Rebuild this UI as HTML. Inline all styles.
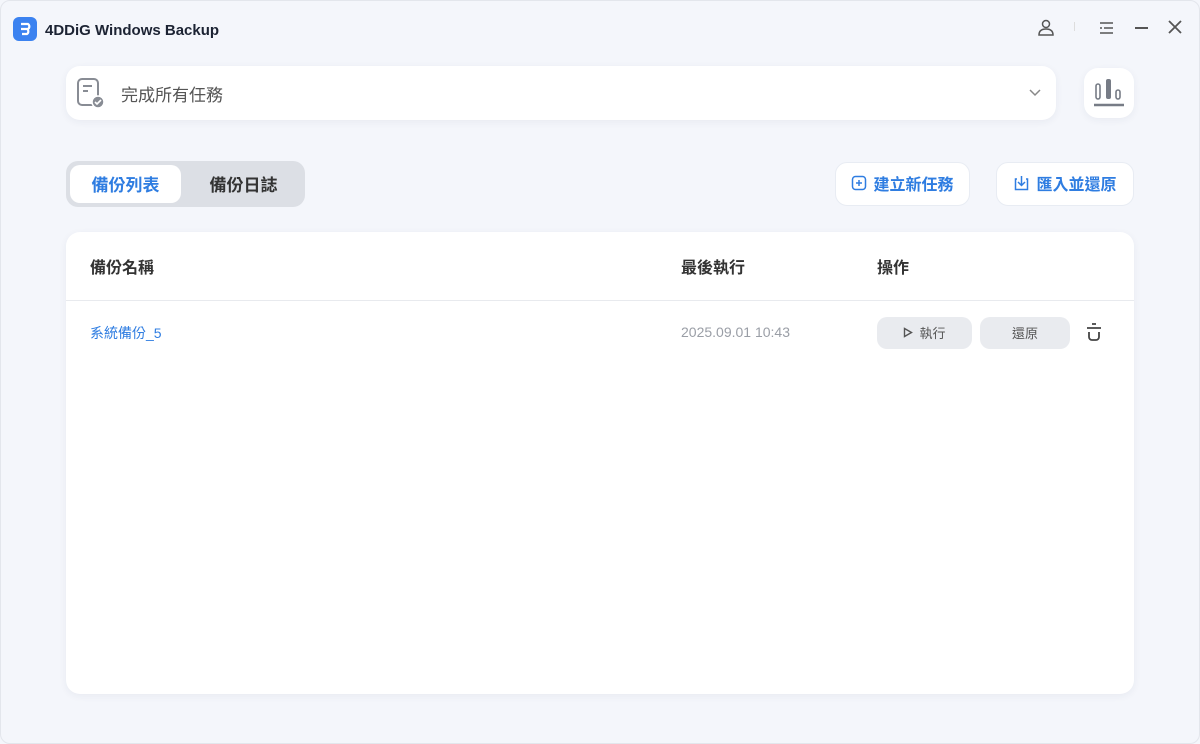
<!DOCTYPE html>
<html><head><meta charset="utf-8"><style>
*{margin:0;padding:0;box-sizing:border-box}
body{width:1200px;height:744px;background:#f4f6fb;font-family:"Liberation Sans","Noto Sans CJK TC",sans-serif;position:relative;overflow:hidden;color:#222}
.abs{position:absolute}
.card{background:#fff;border-radius:14px;box-shadow:0 2px 8px rgba(30,50,90,.06)}
.btn{background:#fff;border-radius:12px;color:#2f7de1;font-size:16px;font-weight:bold;display:flex;align-items:center;justify-content:center;gap:6px;border:1px solid #e8ecf3}
.gbtn{background:#e9ebef;border-radius:10px;font-size:13px;color:#555;display:flex;align-items:center;justify-content:center;gap:6px}
</style></head><body>
<div class="abs" style="left:0;top:0;width:1200px;height:744px;border:1px solid #e3e6ec;border-radius:10px"></div>
<div class="abs" style="left:13px;top:17px;width:24px;height:24px;background:#3b82f0;border-radius:6px"><svg width="24" height="24"><path d="M8 7h7a3 3 0 0 1 0 5H10M8 12h6a3 3 0 0 1 0 5H9" stroke="#fff" stroke-width="2.2" fill="none"/></svg></div>
<div class="abs" style="left:45px;top:22px;font-size:15px;font-weight:bold;color:#1c2333">4DDiG Windows Backup</div>
<svg class="abs" style="left:1036px;top:18px" width="20" height="20"><circle cx="10" cy="6" r="3.5" stroke="#555" stroke-width="1.5" fill="none"/><path d="M3 17q0-6 7-6t7 6z" stroke="#555" stroke-width="1.5" fill="none"/></svg>
<div class="abs" style="left:1074px;top:22px;width:1px;height:9px;background:#ddd"></div>
<svg class="abs" style="left:1098px;top:19px" width="18" height="18"><path d="M2 4h13M6 9h9M2 14h13M2 9h2" stroke="#555" stroke-width="1.6"/></svg>
<div class="abs" style="left:1135px;top:27px;width:13px;height:1.8px;background:#555"></div>
<svg class="abs" style="left:1167px;top:19px" width="16" height="16"><path d="M2 2l12 12M14 2L2 14" stroke="#555" stroke-width="1.8"/></svg>

<div class="abs card" style="left:66px;top:66px;width:990px;height:54px"></div>
<svg class="abs" style="left:76px;top:77px" width="30" height="32"><rect x="2" y="2" width="20" height="26" rx="4" stroke="#888c94" stroke-width="2" fill="none"/><path d="M7 9h9M7 14h5" stroke="#888c94" stroke-width="2"/><circle cx="22" cy="25" r="6" fill="#888c94" stroke="#fff" stroke-width="1.5"/><path d="M19 25l2 2 4-4" stroke="#fff" stroke-width="1.6" fill="none"/></svg>
<div class="abs" style="left:121px;top:81px;font-size:17px;color:#555">完成所有任務</div>
<svg class="abs" style="left:1028px;top:88px" width="14" height="10"><path d="M2 2l5 5 5-5" stroke="#888" stroke-width="1.5" fill="none"/></svg>
<div class="abs card" style="left:1084px;top:68px;width:50px;height:50px"></div>
<svg class="abs" style="left:1092px;top:78px" width="34" height="32"><rect x="4" y="6" width="4" height="15" rx="2" stroke="#777c86" stroke-width="1.6" fill="none"/><rect x="14" y="1" width="5" height="20" rx="2" fill="#777c86"/><rect x="24" y="12" width="4" height="9" rx="2" stroke="#777c86" stroke-width="1.6" fill="none"/><path d="M2 27h30" stroke="#777c86" stroke-width="2.4"/></svg>

<div class="abs" style="left:66px;top:161px;width:239px;height:46px;background:#dcdfe5;border-radius:12px"></div>
<div class="abs" style="left:70px;top:165px;width:111px;height:38px;background:#fff;border-radius:10px;color:#2f7de1;font-weight:bold;font-size:17px;display:flex;align-items:center;justify-content:center;padding-bottom:2px">備份列表</div>
<div class="abs" style="left:186px;top:165px;width:115px;height:38px;color:#333;font-weight:bold;font-size:17px;display:flex;align-items:center;justify-content:center;padding-bottom:2px">備份日誌</div>

<div class="abs btn" style="left:835px;top:162px;width:135px;height:44px;padding-bottom:2px"><svg width="16" height="16"><rect x="1.5" y="1.5" width="13" height="13" rx="3" stroke="#2f7de1" stroke-width="1.5" fill="none"/><path d="M8 5v6M5 8h6" stroke="#2f7de1" stroke-width="1.5"/></svg>建立新任務</div>
<div class="abs btn" style="left:996px;top:162px;width:138px;height:44px;padding-bottom:2px"><svg width="17" height="16"><path d="M4 4H2.5v10.5h12V4H13M8.5 1v9M5 7l3.5 3.5L12 7" stroke="#2f7de1" stroke-width="1.5" fill="none"/></svg>匯入並還原</div>

<div class="abs card" style="left:66px;top:232px;width:1068px;height:462px"></div>
<div class="abs" style="left:66px;top:300px;width:1068px;height:1px;background:#e8eaee"></div>
<div class="abs" style="left:90px;top:254px;font-size:16px;font-weight:bold;color:#333">備份名稱</div>
<div class="abs" style="left:681px;top:254px;font-size:16px;font-weight:bold;color:#333">最後執行</div>
<div class="abs" style="left:877px;top:254px;font-size:16px;font-weight:bold;color:#333">操作</div>
<div class="abs" style="left:90px;top:323px;font-size:14px;color:#2f7de1">系統備份_5</div>
<div class="abs" style="left:681px;top:324px;font-size:14px;color:#9a9ea6">2025.09.01 10:43</div>
<div class="abs gbtn" style="left:877px;top:317px;width:95px;height:32px;padding-bottom:2px"><svg width="10" height="11"><path d="M1.5 1.5v8l7-4z" stroke="#555" stroke-width="1.4" fill="none"/></svg>執行</div>
<div class="abs gbtn" style="left:980px;top:317px;width:90px;height:32px;padding-bottom:2px">還原</div>
<svg class="abs" style="left:1085px;top:322px" width="18" height="22"><path d="M7 2h4M2 6h14M4 10v5a3 3 0 0 0 3 3h4a3 3 0 0 0 3-3v-5" stroke="#444" stroke-width="1.8" fill="none"/></svg>
</body></html>
